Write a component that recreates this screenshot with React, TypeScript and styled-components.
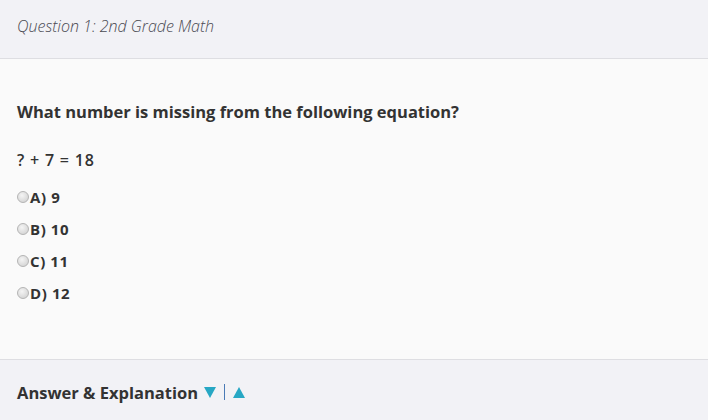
import React from "react";
import styled, { createGlobalStyle } from "styled-components";

const Global = createGlobalStyle`
  html, body { margin: 0; padding: 0; background: #fafafa; }
  body { font-family: "Open Sans", "Liberation Sans", sans-serif; color: #333; }
`;

const Page = styled.div`
  width: 708px;
  height: 420px;
  display: flex;
  flex-direction: column;
  background: #fafafa;
`;

const Header = styled.div`
  height: 59px;
  box-sizing: border-box;
  border-bottom: 1px solid #dedee2;
  background: #f2f2f6;
  display: flex;
  align-items: center;
  padding: 0 17px 7px;
`;

const Title = styled.div`
  font-style: italic;
  font-weight: 300;
  font-size: 16px;
  color: #4a4a52;
`;

const Body = styled.div`
  flex: 1;
  padding: 41px 17px 0;
  display: flex;
  flex-direction: column;
`;

const Question = styled.div`
  font-weight: 700;
  font-size: 16.5px;
  color: #333;
  line-height: 24px;
`;

const Equation = styled.div`
  margin-top: 24px;
  font-weight: 600;
  font-size: 16px;
  letter-spacing: 0.8px;
  line-height: 24px;
  color: #333;
`;

const Options = styled.div`
  margin-top: 13px;
  display: flex;
  flex-direction: column;
  gap: 8px;
`;

const Option = styled.label`
  display: flex;
  align-items: center;
  height: 24px;
  font-weight: 700;
  font-size: 15px;
  letter-spacing: 0.6px;
  color: #333;
`;

const Radio = styled.span`
  width: 12px;
  height: 12px;
  border-radius: 50%;
  box-sizing: border-box;
  border: 1px solid #b4b4b4;
  background: radial-gradient(circle at 40% 35%, #f4f4f4, #cdcdcd);
  margin-right: 1px;
`;

const Footer = styled.div`
  height: 61px;
  box-sizing: border-box;
  border-top: 1px solid #dedee2;
  background: #f2f2f6;
  display: flex;
  align-items: center;
  padding: 4px 17px 0;
  gap: 6px;
  font-weight: 700;
  font-size: 16.5px;
  color: #333;
`;

const Arrow = styled.span<{ up?: boolean }>`
  width: 0;
  height: 0;
  border-left: 6px solid transparent;
  border-right: 6px solid transparent;
  ${(p) => (p.up ? "border-bottom: 11px solid #27a7c4;" : "border-top: 11px solid #27a7c4;")}
`;

const Sep = styled.span`
  width: 1px;
  height: 16px;
  background: #4a7ab6;
  margin: 0 2px;
`;

const options = ["A) 9", "B) 10", "C) 11", "D) 12"];

export default function App() {
  return (
    <Page>
      <Global />
      <Header>
        <Title>Question 1: 2nd Grade Math</Title>
      </Header>
      <Body>
        <Question>What number is missing from the following equation?</Question>
        <Equation>? + 7 = 18</Equation>
        <Options>
          {options.map((o) => (
            <Option key={o}>
              <Radio />
              {o}
            </Option>
          ))}
        </Options>
      </Body>
      <Footer>
        <span>Answer &amp; Explanation</span>
        <Arrow />
        <Sep />
        <Arrow up />
      </Footer>
    </Page>
  );
}
